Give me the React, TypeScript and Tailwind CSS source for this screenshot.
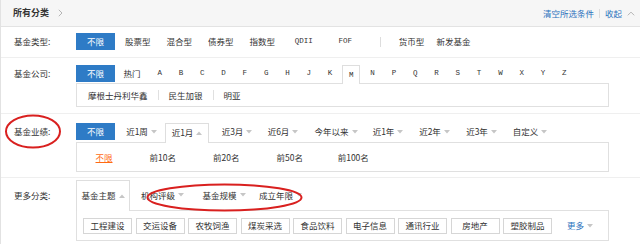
import React from "react";

const CJK = { fontFamily: '"Noto Sans CJK SC", "Noto Sans", sans-serif' };
const MONO = { fontFamily: '"Liberation Mono", "DejaVu Sans Mono", monospace' };

const Caret = ({ up }: { up?: boolean }) => (
  <svg width="6" height="4" viewBox="0 0 6 4" className="ml-[3px] shrink-0">
    <path d={up ? "M0 4L3 0.5L6 4Z" : "M0 0L6 0L3 3.5Z"} fill="#c6c6c6" />
  </svg>
);

const BlueBtn = ({ h = "h-[17px]" }: { h?: string }) => (
  <div className={`w-[39px] ${h} bg-[#2e7bc6] text-white text-[8.5px] flex items-center justify-center shrink-0`}>
    不限
  </div>
);

const Label = ({ text, h }: { text: string; h: string }) => (
  <div className={`w-[75px] pl-[13px] shrink-0 flex items-center text-[8.5px] text-[#333] ${h}`}>{text}</div>
);

export default function App() {
  const letters = ["A", "B", "C", "D", "F", "G", "H", "J", "K", "M", "N", "P", "Q", "R", "S", "T", "W", "X", "Y", "Z"];
  const perfTabs: [string, number, boolean][] = [
    ["近1周", 47, false],
    ["近1月", 44, true],
    ["近3月", 56, false],
    ["近6月", 36, false],
    ["今年以来", 70, false],
    ["近1年", 34, false],
    ["近2年", 59, false],
    ["近3年", 35, false],
    ["自定义", 62, false],
  ];
  const moreTabs: [string, number, boolean][] = [
    ["基金主题", 54, true],
    ["机构评级", 65, false],
    ["基金规模", 58, false],
    ["成立年限", 55, false],
  ];
  const tags = ["工程建设", "交运设备", "农牧饲渔", "煤炭采选", "食品饮料", "电子信息", "通讯行业", "房地产", "塑胶制品"];

  return (
    <div className="relative w-[640px] h-[244px] overflow-hidden bg-white text-[#333]" style={CJK}>
      <div className="border-l border-[#e2e2e2] h-full">
        {/* header */}
        <div className="h-[27px] flex items-center justify-between bg-[#f6f6f6] border-b border-[#e3e3e3] pl-[12px] pr-[5px]">
          <div className="flex items-center">
            <span className="font-bold text-[9px] text-[#333]">所有分类</span>
            <svg width="5" height="8" viewBox="0 0 5 8" className="ml-[9px]">
              <path d="M0.8 0.8L4 4L0.8 7.2" stroke="#b5b5b5" strokeWidth="1" fill="none" />
            </svg>
          </div>
          <div className="flex items-center text-[8.5px] text-[#2b72bd]">
            <span>清空所选条件</span>
            <span className="mx-[5px] w-px h-[9px] bg-[#dcdcdc]" />
            <span>收起</span>
            <svg width="8" height="5" viewBox="0 0 8 5" className="ml-[5px]">
              <path d="M0.8 4.3L4 1.1L7.2 4.3" stroke="#b5b5b5" strokeWidth="1" fill="none" />
            </svg>
          </div>
        </div>

        {/* row 1 */}
        <div className="flex pt-[6px] pb-[7px] border-b border-[#efefef]">
          <Label text="基金类型:" h="h-[17px]" />
          <BlueBtn />
          <div className="flex items-center ml-[2px] text-[8.5px]">
            {["股票型", "混合型", "债券型", "指数型"].map((t) => (
              <div key={t} className="w-[41.5px] text-center">{t}</div>
            ))}
            <div className="w-[41.5px] text-center text-[7.5px]" style={MONO}>QDII</div>
            <div className="w-[41.5px] text-center text-[7.5px]" style={MONO}>FOF</div>
            <span className="ml-[14px] w-px h-[10px] bg-[#dddddd]" />
            <div className="ml-[9.5px] w-[42px] text-center">货币型</div>
            <div className="w-[42px] text-center">新发基金</div>
          </div>
        </div>

        {/* row 2 */}
        <div className="flex pt-[7px] pb-[6px] border-b border-[#efefef]">
          <Label text="基金公司:" h="h-[17px]" />
          <div className="flex flex-col">
            <div className="flex items-start h-[18px]">
              <BlueBtn />
              <div className="w-[34px] h-[17px] flex items-center justify-center text-[8.5px]">热门</div>
              {letters.map((l) => (
                <div key={l} className="w-[21.3px] flex justify-center">
                  {l === "M" ? (
                    <div className="relative z-10 w-[18px] h-[19px] bg-white border border-b-0 border-[#dedede] flex items-start pt-[4px] justify-center text-[7.5px]" style={MONO}>
                      {l}
                    </div>
                  ) : (
                    <div className="h-[17px] flex items-center text-[7.5px]" style={MONO}>{l}</div>
                  )}
                </div>
              ))}
            </div>
            <div className="w-[533px] h-[24px] border border-[#e0e0e0] flex items-center pl-[11px] text-[8.5px]">
              <span>摩根士丹利华鑫</span>
              <span className="mx-[10px] w-px h-[10px] bg-[#e0e0e0]" />
              <span>民生加银</span>
              <span className="mx-[10px] w-px h-[10px] bg-[#e0e0e0]" />
              <span>明亚</span>
            </div>
          </div>
        </div>

        {/* row 3 */}
        <div className="flex pt-[9px] pb-[5px] border-b border-[#efefef]">
          <Label text="基金业绩:" h="h-[17px]" />
          <div className="flex flex-col">
            <div className="flex items-start h-[19px]">
              <BlueBtn />
              <div className="flex ml-[3px] text-[8.5px]">
                {perfTabs.map(([t, w, active]) =>
                  active ? (
                    <div key={t} className="relative z-10 h-[20px] bg-white border border-b-0 border-[#dedede] flex items-start pt-[3px] justify-center" style={{ width: w }}>
                      <div className="flex items-center h-[11px]">{t}<Caret up /></div>
                    </div>
                  ) : (
                    <div key={t} className="h-[17px] flex items-center justify-center" style={{ width: w }}>
                      {t}
                      <Caret />
                    </div>
                  )
                )}
              </div>
            </div>
            <div className="w-[533px] h-[30px] border border-[#e0e0e0] flex items-center text-[8.5px]">
              <div className="w-[54px] text-center text-[#ff6a13] underline">不限</div>
              {["前10名", "前20名", "前50名", "前100名"].map((t) => (
                <div key={t} className="w-[63.5px] text-center">{t}</div>
              ))}
            </div>
          </div>
        </div>

        {/* row 4 */}
        <div className="flex pt-[2px]">
          <Label text="更多分类:" h="h-[30px]" />
          <div className="flex flex-col">
            <div className="flex items-start h-[30px] text-[8.5px]">
              {moreTabs.map(([t, w, active]) =>
                active ? (
                  <div key={t} className="relative z-10 h-[31px] bg-white border border-b-0 border-[#dedede] flex items-center justify-center pb-px" style={{ width: w }}>
                    {t}
                    <Caret up />
                  </div>
                ) : (
                  <div key={t} className="h-[30px] flex items-center justify-center" style={{ width: w }}>
                    {t}
                    <Caret />
                  </div>
                )
              )}
            </div>
            <div className="w-[533px] h-[31px] border border-[#e0e0e0] flex items-center pl-[6px] text-[8.5px]">
              <div className="flex gap-[3.5px]">
                {tags.map((t) => (
                  <div key={t} className="w-[49px] h-[16px] border border-[#d6d6d6] flex items-center justify-center">{t}</div>
                ))}
              </div>
              <div className="ml-[15px] flex items-center text-[#2b72bd]">
                更多
                <Caret />
              </div>
            </div>
          </div>
        </div>
      </div>

      {/* red annotation ellipses */}
      <svg className="absolute inset-0 pointer-events-none z-20" width="640" height="244" viewBox="0 0 640 244">
        <ellipse cx="33" cy="131.5" rx="27" ry="16" fill="none" stroke="#d9201f" strokeWidth="2" />
        <ellipse cx="224.5" cy="197.5" rx="77" ry="13" fill="none" stroke="#d9201f" strokeWidth="2" />
      </svg>
    </div>
  );
}
